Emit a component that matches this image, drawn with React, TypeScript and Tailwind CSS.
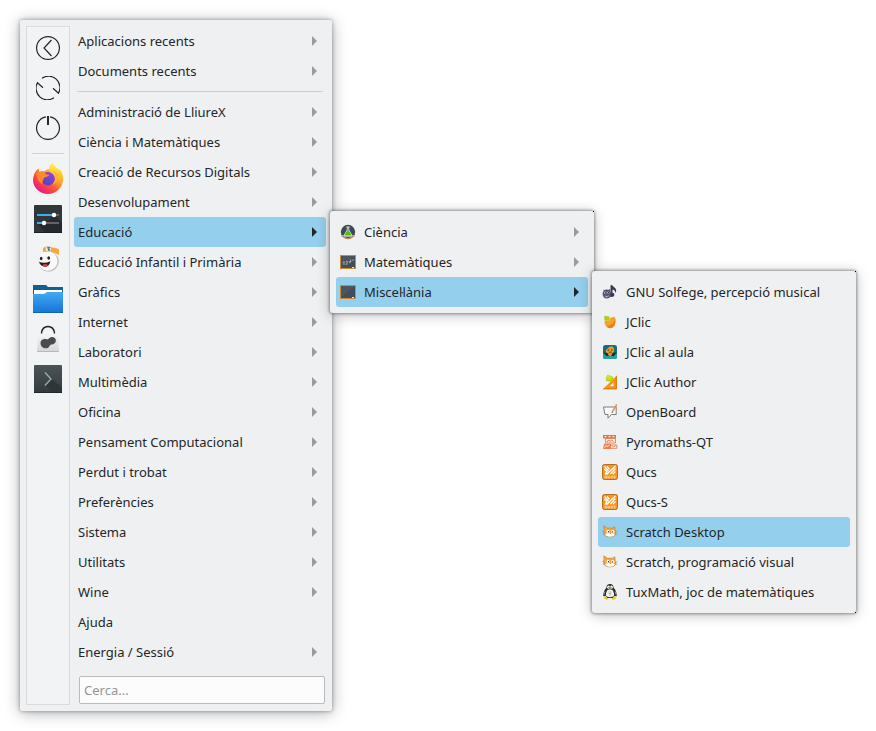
import type { ReactNode } from "react";
import clsx from "clsx";

type Entry = {
  label: string;
  icon?: ReactNode;
  arrow?: boolean;
  active?: boolean;
  submenu?: Entry[];
};

function ScienceIcon() {
  return (
    <svg viewBox="0 0 16 16" className="size-4">
      <circle cx="8" cy="8" r="7.2" fill="#3f4a56" />
      <path d="M1.400 11h13.200v1.500h-1.500A7.200 7.200 0 0 1 8 15.200a7.200 7.200 0 0 1-5.100-2.700H1.400z" fill="#c59a63" />
      <path d="M4 12.500h8a7 7 0 0 1-8 0z" fill="#3f4a56" />
      <path d="M6.400 2.400h3.200v1h-.4v2.500l3 5.200c.2.800-.1 1.400-.9 1.400H4.700c-.8 0-1.100-.6-.9-1.400l3-5.200V3.400h-.4z" fill="#dfe8e4" />
      <path d="M7.500 3.400h1v2.800l1 1.600h-3l1-1.600z" fill="#6b7982" />
      <path d="M6.200 8h3.600l1.900 3.500H4.300z" fill="#4fc20c" />
    </svg>
  );
}

function BoardIcon({ chalk }: { chalk?: boolean }) {
  return (
    <svg viewBox="0 0 16 16" className="size-4">
      <path d="M0 1h16v14H0z" fill="#c98b3f" />
      <path d="M1 2h14v12H1z" fill="#434d57" />
      <path d="M1 2h14L1 13z" fill="#4b5660" />
      {chalk && (
        <path
          d="m3 8.500 1-1V11M6 8l1.200-.8V9L6 10.500l1.500-.5M9 7l.5 1.500M10.500 5.500v3M11.500 7 14 5.500M9 9l1.500-1"
          fill="none"
          stroke="#aab2b8"
          strokeWidth=".9"
        />
      )}
      <path d="M12 13h2v1h-2z" fill="#e4e4e4" />
    </svg>
  );
}

function SolfegeIcon() {
  return (
    <svg viewBox="0 0 16 16" className="size-4">
      <path d="M8.500 1.500 10 .8c.4 2 4 2.600 4.200 5.700 0 1-.3 1.800-.8 2.500 0-2-1.200-3.200-2.900-3.500l-.2 5.500H8.500z" fill="#3b3857" />
      <ellipse cx="9.500" cy="10.800" rx="2.800" ry="2.200" fill="#3b3857" />
      <ellipse cx="4.800" cy="10" rx="4.200" ry="4.600" fill="#55516f" />
      <path d="M1.500 5.500 4 6.500 2 8zM8 5l-2.500 1.500L8 8z" fill="#55516f" />
      <circle cx="3.200" cy="8.800" r="1.200" fill="#b9b6cc" />
      <circle cx="6.300" cy="8.600" r="1.200" fill="#b9b6cc" />
      <circle cx="3.400" cy="8.900" r=".6" fill="#1e1b30" />
      <circle cx="6.500" cy="8.700" r=".6" fill="#1e1b30" />
      <path d="M2.500 11.500c1.500.8 3.300.6 4.700-.4-.3 1.500-1.200 2.200-2.300 2.300s-2-.6-2.400-1.900z" fill="#a9a6c0" />
    </svg>
  );
}

function JClicIcon() {
  return (
    <svg viewBox="0 0 16 16" className="size-4">
      <path d="M2.500 6.500h5.300V4l5-1.200c1.400 4.500.4 11-4.500 11.400C4.500 14.400 2.300 11 2.500 6.500z" fill="#f5a227" />
      <path d="M8.300 14.200c4.500-.4 5.700-5 4.900-9.700-.9 4-3.700 6.800-8.300 7.800 1 1.300 2.100 1.900 3.400 1.900z" fill="#e28512" />
      <path d="m2.300 1.800 5.300.6-.3 4.300-5-.4z" fill="#b3c82b" />
    </svg>
  );
}

function JClicClassIcon() {
  return (
    <svg viewBox="0 0 16 16" className="size-4">
      <rect x="1" y="1" width="14" height="14" rx="2.500" fill="#176b84" />
      <path d="M1 10h14v2.500a2.500 2.500 0 0 1-2.500 2.500h-9A2.500 2.500 0 0 1 1 12.500z" fill="#2a9fa0" />
      <path d="M4 6 6 4l2-1.500L12 4v4l-2 2.500H6L4 9z" fill="#e79b24" />
      <path d="M1.800 8.500 5 8.800l3 2 3-2 3.200-.3-2 3.500H4z" fill="#14323b" />
      <path d="M5.500 9.500h5L9 12H7z" fill="#e7902a" />
      <path d="M5.700 5.500h1.500v1H5.700zM9 5.500h1.500v1H9zM6.700 7.800h3v.8h-3z" fill="#3a3420" />
      <path d="M8.500 2.500H11v1.200H8.500z" fill="#9fc53b" />
    </svg>
  );
}

function JClicAuthorIcon() {
  return (
    <svg viewBox="0 0 16 16" className="size-4">
      <path d="M14.800 1.500v13.700H.8z" fill="#f4951e" />
      <path d="M11.500 8.500v3.700H7.700z" fill="#eff0f1" />
      <path d="M14.800 1.500v13.700H.8l1-1h12V2.500z" fill="#dd7608" />
      <path d="m5.500.8 5 1.700.8 2L9.700 7.500l-5.200-.4-.8-2z" fill="#a7cb0c" />
      <path d="m5.500.8 5 1.700-1.300 3.700-5.200-.8z" fill="#cbe31f" />
    </svg>
  );
}

function OpenBoardIcon() {
  return (
    <svg viewBox="0 0 16 16" className="size-4">
      <path d="M1.500 3h12.700v7.500H9.500L6 14.200v-3.700H3z" fill="#fafafa" stroke="#7b7c7d" strokeWidth="1" strokeLinejoin="round" />
      <path d="M14.700.5 10.300 8" stroke="#ec8a5c" strokeWidth="1.500" />
      <path d="m9.900 7.400 1.200.8-1.500 1z" fill="#666" />
    </svg>
  );
}

function PyromathsIcon() {
  return (
    <svg viewBox="0 0 16 16" className="size-4">
      <path d="M1 1h13v3.500H1z" fill="#e0733f" />
      <path d="M2.500 2h2v1.200h-2zM6.500 2h2v1.200h-2zM10.500 2h2v1.200h-2z" fill="#fbe9df" />
      <path d="M3.500 4.500h10V9h-10z" fill="#fbeee7" stroke="#e0733f" strokeWidth=".8" />
      <path d="m5 8 1.500-2L8 7.500 9.500 6l2 1.500" fill="none" stroke="#d2572a" strokeWidth=".8" />
      <path d="M2 9.800h7V15H1z" fill="#ea8352" />
      <path d="m2.500 13.500 1.500-2 1.500 1 2-1.500" stroke="#fff" strokeWidth=".8" fill="none" />
      <path d="M8.500 11h6.300v3.300H8.500z" fill="#fdf3ee" stroke="#e0733f" strokeWidth=".8" />
      <path d="m9.500 11.500 2.200 1.500 2.300-1.500" stroke="#e0733f" strokeWidth=".7" fill="none" />
    </svg>
  );
}

function QucsIcon() {
  return (
    <svg viewBox="0 0 16 16" className="size-4">
      <rect x=".5" y=".5" width="15" height="15" rx="2" fill="#f7951d" stroke="#b3701f" strokeWidth="1" />
      <path d="M13.500 2 4.500 10.500M2.500 2.500 6.500 7M2.300 5l3 3M5 2.300l2.500 3" stroke="#fff" strokeWidth="1.300" />
      <path d="m13.500 4.500-5 5.500M13.500 7.500 11 10" stroke="#fff" strokeWidth="1.200" />
      <path d="M2.500 10.800 4 7.500 6.800 10z" fill="#fff" />
      <path
        d="M3 12.200h2v1.800H3zM6.300 12v2h1.500v-2M11 12.200H9.400V14H11M13.500 12.200h-1.700V13h1.300v1h-1.400"
        fill="none"
        stroke="#fde3bf"
        strokeWidth=".7"
      />
    </svg>
  );
}

function ScratchIcon() {
  return (
    <svg viewBox="0 0 16 16" className="size-4">
      <path
        d="M1.800 1.800 5.500 4.300c1.500-.4 3-.4 4.500.1l2.700-1.700.6 4c1 1.400.9 3.400-.5 4.700-2.200 2-7.500 2-9.800.1C1.200 9.700 1.200 7.300 2 5.800z"
        fill="#f5a63f"
        stroke="#a98049"
        strokeWidth=".6"
      />
      <path d="M3.200 10.500c.9-1.200 2.600-1.500 4.300-1.300 1.900-.3 4.200.1 5.300 1.300-.8 1.600-2.600 2.200-5 2.200-2.200 0-3.900-.8-4.600-2.200z" fill="#fff" />
      <ellipse cx="6" cy="7.400" rx="1.500" ry="1.700" fill="#fff" />
      <ellipse cx="10.800" cy="7.600" rx="1.600" ry="1.700" fill="#fff" />
      <circle cx="6.500" cy="7.700" r=".7" fill="#333" />
      <circle cx="10.500" cy="7.900" r=".7" fill="#333" />
      <path d="M7.800 9h1.600l-.8.800z" fill="#554433" />
      <path d="m.3 7.500 2.700.8M.8 10.700 3 10M13.500 8.300l2.200-.8M13.500 10l2 .7" stroke="#a8947c" strokeWidth=".6" />
    </svg>
  );
}

function TuxIcon() {
  return (
    <svg viewBox="0 0 16 16" className="size-4">
      <path d="M8 0c2.500 0 3.500 1.500 3.600 3.700 1.900 2 3.200 4.500 3.200 8-.5.800-1.500.6-2.300.1L11 14H5l-1.500-2.200c-.8.500-1.800.7-2.300-.1 0-3.500 1.300-6 3.200-8C4.500 1.500 5.500 0 8 0z" fill="#2a2c2e" />
      <path d="M4 11.500c-.5-2.500.9-4.600 1.800-5.800h4.400c.9 1.200 2.300 3.300 1.800 5.800-1.500 2.200-6.500 2.200-8 0z" fill="#f4f4f4" />
      <path d="M2.700 7.500c-.4 1-.7 2-.7 3M13.300 7.500c.4 1 .7 2 .7 3" stroke="#b5b5b5" strokeWidth=".9" fill="none" />
      <ellipse cx="6.500" cy="3.200" rx="1.300" ry="1.600" fill="#fff" />
      <ellipse cx="9.500" cy="3.200" rx="1.300" ry="1.600" fill="#fff" />
      <circle cx="7" cy="3.400" r=".5" fill="#111" />
      <circle cx="9" cy="3.400" r=".5" fill="#111" />
      <path d="M6.500 5 8 4.200 9.500 5 8 6.200z" fill="#d5ad2a" />
      <path d="M6.500 8h3M6.500 9.500h3M7 11h2" stroke="#999" strokeWidth=".7" />
      <path d="m1.500 14 2.500-1.800L6.500 15l-2 .9zM14.500 14 12 12.200 9.500 15l2 .9z" fill="#f2cb13" />
    </svg>
  );
}

const miscellany: Entry[] = [
  { label: "GNU Solfege, percepció musical", icon: <SolfegeIcon /> },
  { label: "JClic", icon: <JClicIcon /> },
  { label: "JClic al aula", icon: <JClicClassIcon /> },
  { label: "JClic Author", icon: <JClicAuthorIcon /> },
  { label: "OpenBoard", icon: <OpenBoardIcon /> },
  { label: "Pyromaths-QT", icon: <PyromathsIcon /> },
  { label: "Qucs", icon: <QucsIcon /> },
  { label: "Qucs-S", icon: <QucsIcon /> },
  { label: "Scratch Desktop", icon: <ScratchIcon />, active: true },
  { label: "Scratch, programació visual", icon: <ScratchIcon /> },
  { label: "TuxMath, joc de matemàtiques", icon: <TuxIcon /> },
];

const education: Entry[] = [
  { label: "Ciència", icon: <ScienceIcon />, arrow: true },
  { label: "Matemàtiques", icon: <BoardIcon chalk />, arrow: true },
  { label: "Miscel·lània", icon: <BoardIcon />, arrow: true, active: true, submenu: miscellany },
];

const recent: Entry[] = [
  { label: "Aplicacions recents", arrow: true },
  { label: "Documents recents", arrow: true },
];

const categories: Entry[] = [
  { label: "Administració de LliureX", arrow: true },
  { label: "Ciència i Matemàtiques", arrow: true },
  { label: "Creació de Recursos Digitals", arrow: true },
  { label: "Desenvolupament", arrow: true },
  { label: "Educació", arrow: true, active: true, submenu: education },
  { label: "Educació Infantil i Primària", arrow: true },
  { label: "Gràfics", arrow: true },
  { label: "Internet", arrow: true },
  { label: "Laboratori", arrow: true },
  { label: "Multimèdia", arrow: true },
  { label: "Oficina", arrow: true },
  { label: "Pensament Computacional", arrow: true },
  { label: "Perdut i trobat", arrow: true },
  { label: "Preferències", arrow: true },
  { label: "Sistema", arrow: true },
  { label: "Utilitats", arrow: true },
  { label: "Wine", arrow: true },
  { label: "Ajuda" },
  { label: "Energia / Sessió", arrow: true },
];

const session = [
  {
    label: "Surt",
    icon: (
      <>
        <circle cx="12" cy="12" r="11.400" />
        <path d="M15.500 4 8 12l7.500 8" />
      </>
    ),
  },
  {
    label: "Reinicia",
    icon: (
      <>
        <path d="M6 2.300A11.400 11.400 0 0 1 22.500 17.200L17 12.200" />
        <path d="M18 21.700A11.400 11.400 0 0 1 1.500 6.800L7 11.800" />
      </>
    ),
  },
  {
    label: "Atura",
    icon: (
      <>
        <path d="M10 .8a11.400 11.400 0 1 0 4 0" />
        <path d="M12 0v9" strokeWidth="2" />
      </>
    ),
  },
];

const favourites = [
  {
    label: "Firefox",
    icon: (
      <>
        <defs>
          <linearGradient id="fox" x1=".85" y1=".1" x2=".2" y2=".95">
            <stop offset="0" stopColor="#fff04a" />
            <stop offset=".35" stopColor="#ffa62b" />
            <stop offset=".65" stopColor="#ff4f3c" />
            <stop offset="1" stopColor="#e8118a" />
          </linearGradient>
          <linearGradient id="flame" x1=".5" y1="0" x2=".6" y2="1">
            <stop offset="0" stopColor="#fff04a" />
            <stop offset=".5" stopColor="#ffc532" />
            <stop offset="1" stopColor="#ff7a2e" stopOpacity="0" />
          </linearGradient>
          <linearGradient id="globe" x1=".8" y1="0" x2=".3" y2="1">
            <stop offset="0" stopColor="#9a3fe0" />
            <stop offset="1" stopColor="#5446b8" />
          </linearGradient>
        </defs>
        <path
          d="M20.500 0c.5 3 5 4.600 7 8.200-.2-1.300-.4-1.800-.4-2.400C30 8.500 31.300 13 31 17c-.7 8.300-7.300 14-15 14S1.200 25 1 17.500C.9 12.500 3 8.500 6.500 5.200L7.400 9c1.500-.9 3.200-1.100 4.800-.6 1-1.200 2.500-2 4.300-2.200L17 6c0-2.500 1.500-4.600 3.500-6z"
          fill="url(#fox)"
        />
        <path d="M20.500 0c.5 3 5 4.600 7 8.200-.2-1.300-.4-1.800-.4-2.400C30 8.500 31.300 13 31 17c-.3 4-2 7.500-5 10 1-6 .5-9-2-12s-5-5-7-9c0-2.500 1.500-4.600 3.500-6z" fill="url(#flame)" />
        <circle cx="16" cy="15.700" r="6.800" fill="url(#globe)" />
        <path d="M4 10.500 7.400 9c2-1 4-1 5.500-.2-.3 1.600.7 2.700 4.300 3-.3 1.400-2 1.900-3.700 2.300-1.700.5-2.400 1.500-2.200 3-1 1.300-1.200 2.800-.6 4.400C7 19.500 5 15.500 4 10.500z" fill="#ff8a2a" />
        <path d="M16.500 6.300c3.500 1 6 3.200 6.700 6.700 1 3.500-.3 6.500-3 8.300 4-.8 6.300-3.800 6-7.800-.5-3.300-3.500-6-9.700-7.200z" fill="#ffb52f" />
      </>
    ),
  },
  {
    label: "Configuració del sistema",
    icon: (
      <>
        <rect x="2" y="2" width="28" height="28" rx="1" fill="#31363b" />
        <path d="m22 12 8 8v10H14l-8-9 5-2 3 1z" fill="#262a2e" />
        <path d="M2 29h28v1H2z" fill="#1d2023" />
        <path d="M5 12h22M5 20h22" stroke="#616569" strokeWidth="1.800" />
        <path d="M5 12h17M5 20h7" stroke="#3daee9" strokeWidth="1.800" />
        <circle cx="22" cy="12" r="2.200" fill="#fff" />
        <circle cx="12" cy="20" r="2.200" fill="#fff" />
      </>
    ),
  },
  {
    label: "Assistent",
    icon: (
      <>
        <path d="m11 5 4-1.500L26.500 6l.5 6-4-2-9-1.500-3 .5z" fill="#f3a83c" />
        <circle cx="16.500" cy="18.500" r="10.300" fill="#bfc0c1" />
        <circle cx="15.800" cy="18" r="9.700" fill="#fbfbfb" />
        <path d="m11 5 4-1.500L26.500 6l.5 6c-4-3.300-10-4.500-15.500-3z" fill="#f3a83c" />
        <circle cx="16.300" cy="6" r="2.900" fill="#f7f3ea" stroke="#aaa" strokeWidth=".5" />
        <path d="m15 5 2.500-.5L16 7.200l2-.3" stroke="#333" strokeWidth=".9" fill="none" />
        <ellipse cx="9.200" cy="15.500" rx="1.300" ry="1.800" fill="#222" />
        <ellipse cx="16.700" cy="15" rx="1.400" ry="1.800" fill="#222" />
        <path d="M7 18.800c3.800 1.500 7.500 1.300 11.200-.6-.2 3.600-2.300 5.500-5.200 5.500s-5-1.600-6-4.900z" fill="#2b2020" />
        <path d="M10.300 22.300c1.700-1.400 4-1.700 5.600-.4-1.300 1.800-3.900 2.400-5.600.4z" fill="#e23a35" />
      </>
    ),
  },
  {
    label: "Gestor de fitxers",
    icon: (
      <>
        <defs>
          <linearGradient id="folder" x1="0" y1="0" x2="0" y2="1">
            <stop offset="0" stopColor="#45aaf2" />
            <stop offset="1" stopColor="#1473d8" />
          </linearGradient>
        </defs>
        <path d="M1 2h13l2 2h15v12H1z" fill="#135f8f" />
        <path d="M2 7h28v8H2z" fill="#fff" />
        <path d="M1 11h11l3-2h16v21H1z" fill="url(#folder)" />
        <path d="m1 20 10 10H1z" fill="#1689e6" fillOpacity=".5" />
        <path d="M1 29h30v1H1z" fill="#1162b5" />
      </>
    ),
  },
  {
    label: "Botiga de programari",
    icon: (
      <>
        <defs>
          <linearGradient id="bag" x1="0" y1="0" x2="0" y2="1">
            <stop offset="0" stopColor="#f8f8f8" />
            <stop offset="1" stopColor="#d5d6d7" />
          </linearGradient>
        </defs>
        <path d="M6 9h20l1 19.500H5z" fill="url(#bag)" />
        <path d="M5 28h22v1H5z" fill="#b7b9bb" />
        <path d="M9.500 10.500c0-9.500 13-9.500 13 0" fill="none" stroke="#202224" strokeWidth="1.500" />
        <path d="M8.500 20c0-3 3-4.500 6-3.700 1.200.3 2-.3 3-1.300 2.200-2 6-.8 6.300 2 .3 3-2 4.400-4.300 4.600-1.600.1-1.500 1.600-3 2.800-2.700 2.200-8 .6-8-4.400z" fill="#4a4b4d" />
      </>
    ),
  },
  {
    label: "Terminal",
    icon: (
      <>
        <defs>
          <linearGradient id="term" x1="0" y1="0" x2="0" y2="1">
            <stop offset="0" stopColor="#4a5557" />
            <stop offset="1" stopColor="#323a3c" />
          </linearGradient>
        </defs>
        <rect x="2" y="2" width="28" height="28" rx="1" fill="url(#term)" />
        <path d="m20 16 10 9v5H21l-8-8z" fill="#2f3638" />
        <path d="M2 29h28v1H2z" fill="#22282a" />
        <path d="m13 9.500 6 6.500-6 6.500" fill="none" stroke="#a4abad" strokeWidth="1.300" />
      </>
    ),
  },
];

function MenuRow({ entry }: { entry: Entry }) {
  return (
    <li className="relative">
      <button
        type="button"
        className={clsx(
          "flex h-[30px] w-full items-center gap-2 rounded-[3px] px-1 text-left whitespace-nowrap",
          entry.active && "bg-[#94cfed]",
        )}
      >
        {entry.icon}
        <span>{entry.label}</span>
        {entry.arrow && (
          <svg
            viewBox="0 0 5 10"
            className={clsx("mr-[5px] ml-auto h-2.5 w-[5px]", entry.active ? "fill-[#232629]" : "fill-[#999b9d]")}
          >
            <path d="M0 0 5 5 0 10z" />
          </svg>
        )}
      </button>
      {entry.submenu && (
        <Popup>
          {entry.submenu.map((item) => (
            <MenuRow key={item.label} entry={item} />
          ))}
        </Popup>
      )}
    </li>
  );
}

function Popup({ children }: { children: ReactNode }) {
  return (
    <div className="absolute -top-1.5 left-full z-10 ml-1 w-[264px] rounded-[3px] bg-[#eff0f1] p-1.5 shadow-[0_0_3px_1px_rgba(0,0,0,0.36),0_2px_14px_rgba(0,0,0,0.25)]">
      <span className="absolute top-0 right-0 size-px bg-black" />
      <span className="absolute right-0 bottom-0 size-px bg-black" />
      <ul>{children}</ul>
    </div>
  );
}

export default function App() {
  return (
    <main
      lang="ca"
      className="min-h-screen bg-white p-5 font-['Noto_Sans',sans-serif] text-[13px] leading-5 text-[#232629]"
    >
      <div className="flex w-[312px] gap-1 rounded-xs bg-[#eff0f1] p-1.5 shadow-[0_0_4px_rgba(0,0,0,0.36),0_2px_16px_rgba(0,0,0,0.3)]">
        <aside className="flex w-11 shrink-0 flex-col items-center border border-[#d9dbdd] bg-[#f2f3f5] pt-px">
          {session.map((item) => (
            <button key={item.label} type="button" aria-label={item.label} className="flex size-10 items-center justify-center">
              <svg viewBox="0 0 24 24" className="size-6 fill-none stroke-[#232629] stroke-[1.2]">
                {item.icon}
              </svg>
            </button>
          ))}
          <hr className="my-[5px] w-8 border-[#d0d2d4]" />
          {favourites.map((item) => (
            <button key={item.label} type="button" aria-label={item.label} className="flex size-10 items-center justify-center">
              <svg viewBox="0 0 32 32" className="size-8">
                {item.icon}
              </svg>
            </button>
          ))}
        </aside>
        <nav aria-label="Aplicacions" className="min-w-0 flex-1">
          <ul>
            {recent.map((item) => (
              <MenuRow key={item.label} entry={item} />
            ))}
          </ul>
          <hr className="my-[5px] mr-[3px] ml-[3px] border-[#cbcdcf]" />
          <ul>
            {categories.map((item) => (
              <MenuRow key={item.label} entry={item} />
            ))}
          </ul>
          <input
            type="text"
            aria-label="Cerca"
            placeholder="Cerca..."
            className="mt-[9px] mr-px mb-px ml-[5px] block h-7 w-[246px] rounded-xs border border-[#b9bbbd] bg-[#fcfcfc] px-1 placeholder:text-[#929496]"
          />
        </nav>
      </div>
    </main>
  );
}
